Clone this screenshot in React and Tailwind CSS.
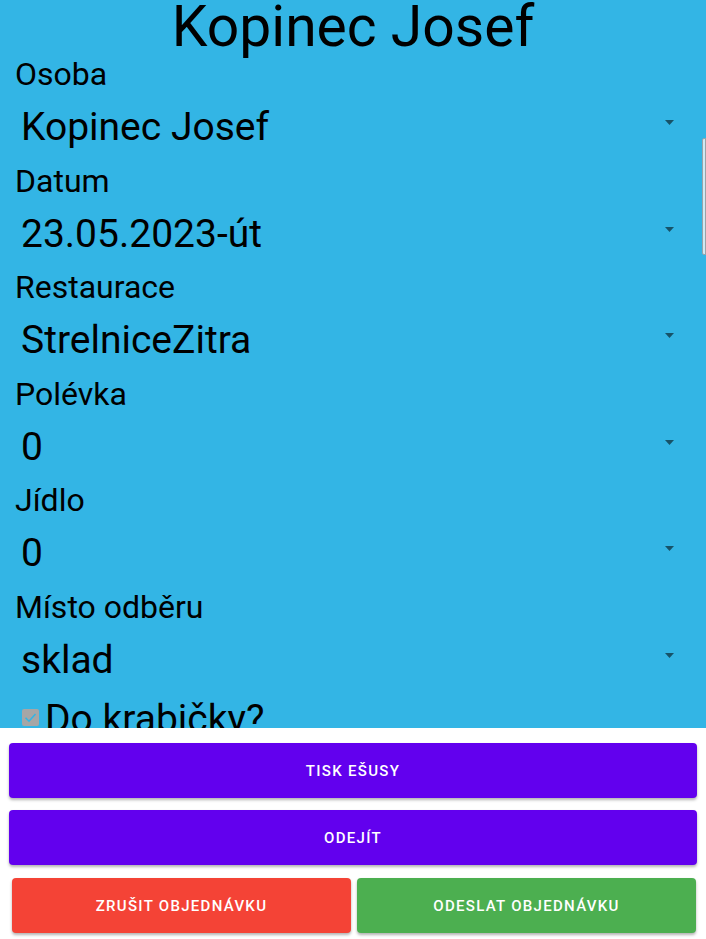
import React from 'react';

const fields = [
    { label: 'Osoba', value: 'Kopinec Josef' },
    { label: 'Datum', value: '23.05.2023-út' },
    { label: 'Restaurace', value: 'StrelniceZitra' },
    { label: 'Polévka', value: '0' },
    { label: 'Jídlo', value: '0' },
    { label: 'Místo odběru', value: 'sklad' },
];

const Field = ({ label, value }) => (
    <div>
        <div className="pl-[15px] text-[32px] leading-[36px] text-black">{label}</div>
        <div className="flex items-start justify-between pt-[13px] pb-[13.5px]">
            <span className="pl-[21px] text-[39px] leading-[44px] text-black">{value}</span>
            <svg className="mt-[15px] mr-[32px]" width="9" height="5" viewBox="0 0 9 5">
                <path d="M0 0 H9 L4.5 5 Z" fill="#175369" />
            </svg>
        </div>
    </div>
);

const App = () => {
    return (
        <div className="flex h-[939px] w-[706px] flex-col overflow-hidden bg-white font-['Roboto',sans-serif]">
            {/* scrolling form */}
            <div className="relative flex-1 overflow-hidden bg-[#33b5e5]">
                <h1 className="pb-[2px] text-center text-[57px] leading-[54px] font-normal text-black">Kopinec Josef</h1>
                {fields.map((f, i) => (
                    <Field key={i} label={f.label} value={f.value} />
                ))}
                <div className="flex items-start pt-[4px] pl-[22px]">
                    <svg className="mt-[10px] shrink-0" width="17" height="17" viewBox="0 0 17 17">
                        <rect x="0" y="0" width="17" height="17" rx="2" fill="#a6a6a6" />
                        <path d="M3.5 8.8 L7 12.2 L13.5 5" fill="none" stroke="#33b5e5" strokeWidth="1.6" />
                    </svg>
                    <span className="pl-[6px] text-[39px] leading-[40px] text-black">Do krabičky?</span>
                </div>
                <div className="absolute top-[138px] right-0 h-[117px] w-[4px] rounded-l-[2px] border border-[#9aa3a8] bg-[#cfe9f3]" />
            </div>

            {/* action buttons */}
            <div className="flex h-[211px] flex-col pt-[15px] text-[15px] font-medium text-white">
                <div className="flex flex-col gap-[12px] px-[9px]">
                    <button className="h-[55px] rounded-[4px] bg-[#6200ee] pt-[1px] tracking-[1.3px] shadow-[0_2px_3px_rgba(0,0,0,0.3)]">TISK EŠUSY</button>
                    <button className="h-[55px] rounded-[4px] bg-[#6200ee] pt-[1px] tracking-[1.3px] shadow-[0_2px_3px_rgba(0,0,0,0.3)]">ODEJÍT</button>
                </div>
                <div className="mt-[13px] flex gap-[6px] pl-[12px] pr-[10px]">
                    <button className="h-[55px] flex-1 rounded-[4px] bg-[#f44336] pt-[1px] tracking-[1.3px] shadow-[0_2px_3px_rgba(0,0,0,0.3)]">ZRUŠIT OBJEDNÁVKU</button>
                    <button className="h-[55px] flex-1 rounded-[4px] bg-[#4caf50] pt-[1px] tracking-[1.3px] shadow-[0_2px_3px_rgba(0,0,0,0.3)]">ODESLAT OBJEDNÁVKU</button>
                </div>
            </div>
        </div>
    );
};

export default App;
